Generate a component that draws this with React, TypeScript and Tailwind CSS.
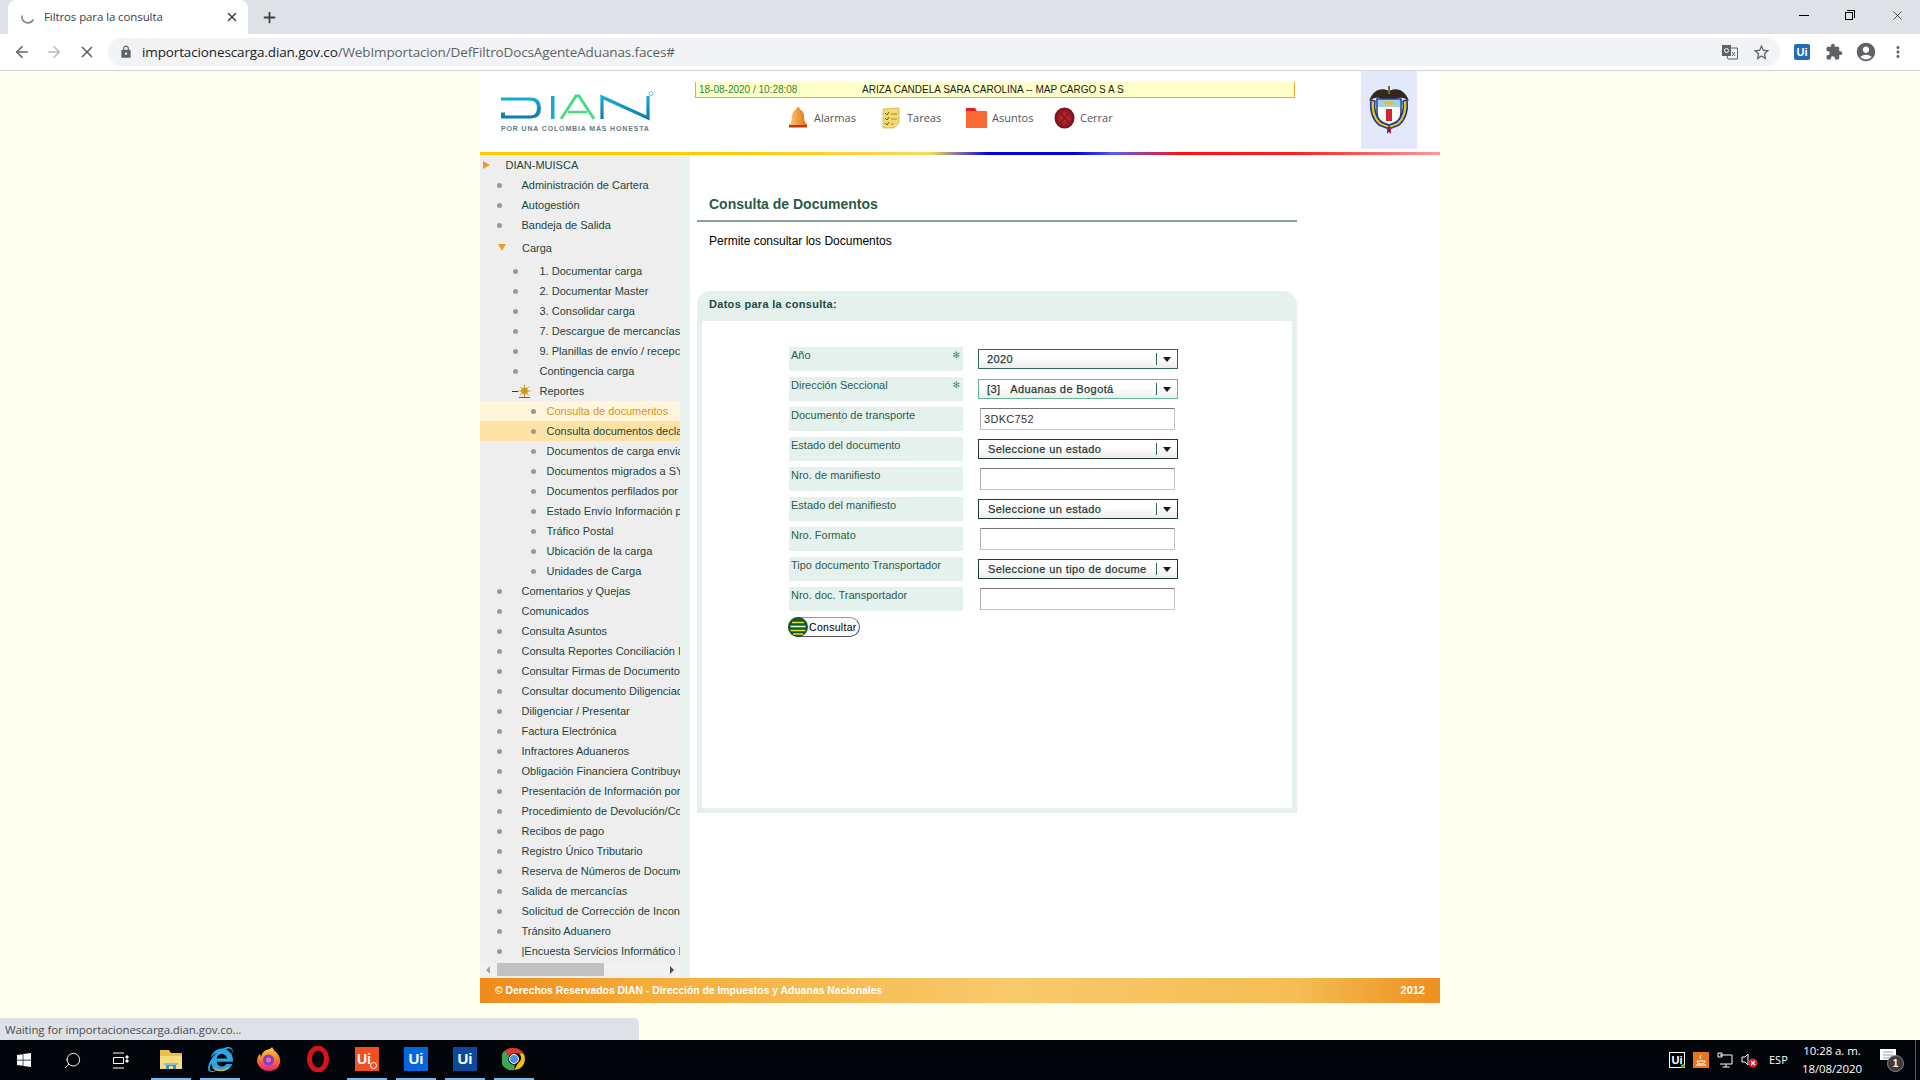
import { ArrowLeft, ArrowRight, Plus, Search, X } from "lucide-react";
import { FaInternetExplorer, FaWindows } from "react-icons/fa";
import { MdAccountCircle, MdExtension, MdLock, MdMoreVert, MdStarBorder } from "react-icons/md";

type MenuRow = { label: string; level: 1 | 2 | 3; kind?: "open" | "root" | "reports"; active?: "current" | "hover"; tall?: boolean };

const menu: MenuRow[] = [
  { label: "DIAN-MUISCA", level: 1, kind: "root" },
  { label: "Administración de Cartera", level: 1 },
  { label: "Autogestión", level: 1 },
  { label: "Bandeja de Salida", level: 1 },
  { label: "Carga", level: 1, kind: "open", tall: true },
  { label: "1. Documentar carga", level: 2 },
  { label: "2. Documentar Master", level: 2 },
  { label: "3. Consolidar carga", level: 2 },
  { label: "7. Descargue de mercancías", level: 2 },
  { label: "9. Planillas de envío / recepción", level: 2 },
  { label: "Contingencia carga", level: 2 },
  { label: "Reportes", level: 2, kind: "reports" },
  { label: "Consulta de documentos", level: 3, active: "current" },
  { label: "Consulta documentos declarados", level: 3, active: "hover" },
  { label: "Documentos de carga enviados", level: 3 },
  { label: "Documentos migrados a SYGA", level: 3 },
  { label: "Documentos perfilados por riesgo", level: 3 },
  { label: "Estado Envío Información portal", level: 3 },
  { label: "Tráfico Postal", level: 3 },
  { label: "Ubicación de la carga", level: 3 },
  { label: "Unidades de Carga", level: 3 },
  { label: "Comentarios y Quejas", level: 1 },
  { label: "Comunicados", level: 1 },
  { label: "Consulta Asuntos", level: 1 },
  { label: "Consulta Reportes Conciliación Importación", level: 1 },
  { label: "Consultar Firmas de Documentos", level: 1 },
  { label: "Consultar documento Diligenciado", level: 1 },
  { label: "Diligenciar / Presentar", level: 1 },
  { label: "Factura Electrónica", level: 1 },
  { label: "Infractores Aduaneros", level: 1 },
  { label: "Obligación Financiera Contribuyentes", level: 1 },
  { label: "Presentación de Información por envío", level: 1 },
  { label: "Procedimiento de Devolución/Compensación", level: 1 },
  { label: "Recibos de pago", level: 1 },
  { label: "Registro Único Tributario", level: 1 },
  { label: "Reserva de Números de Documentos", level: 1 },
  { label: "Salida de mercancías", level: 1 },
  { label: "Solicitud de Corrección de Inconsistencias", level: 1 },
  { label: "Tránsito Aduanero", level: 1 },
  { label: "|Encuesta Servicios Informático Electrónicos", level: 1 },
];

function Dot() {
  return <span className="block w-[5px] h-[5px] rounded-full bg-[#999999]" />;
}

function MenuItem({ row }: { row: MenuRow }) {
  const bg = row.active === "current" ? "bg-[#fff6dc]" : row.active === "hover" ? "bg-[#ffe3a6]" : "";
  const color = row.active === "current" ? "text-[#d8921c]" : "text-[#24443a]";
  return (
    <div className={`flex items-center whitespace-nowrap overflow-hidden w-[200px] ${row.tall ? "h-[26px]" : "h-[20px]"} ${bg} ${color}`}>
      {row.kind === "root" && (
        <>
          <span className="ml-[3px] w-0 h-0 border-y-[4px] border-y-transparent border-l-[7px] border-l-[#f09a28]" />
          <span className="ml-[15.5px]">{row.label}</span>
        </>
      )}
      {row.kind === "open" && (
        <>
          <span className="ml-[18px] -mt-[2px] w-0 h-0 border-x-[4px] border-x-transparent border-t-[7px] border-t-[#f09a28]" />
          <span className="ml-[16px]">{row.label}</span>
        </>
      )}
      {row.kind === "reports" && (
        <>
          <span className="ml-[32px] w-[6px] h-[1px] bg-[#333333]" />
          <svg width="13" height="13" viewBox="0 0 13 13">
            <circle cx="6.5" cy="6" r="3.4" fill="#d8a015" />
            <path d="M6.5 0v12M0.5 6h12M2.2 1.7l8.6 8.6M10.8 1.7l-8.6 8.6" stroke="#c79a1c" strokeWidth="1" />
            <path d="M1 12.5h11" stroke="#4c7a2c" strokeWidth="1" />
          </svg>
          <span className="ml-[8.5px]">{row.label}</span>
        </>
      )}
      {!row.kind && row.level === 1 && (
        <>
          <span className="ml-[17px]"><Dot /></span>
          <span className="ml-[19.5px]">{row.label}</span>
        </>
      )}
      {!row.kind && row.level === 2 && (
        <>
          <span className="ml-[33px]"><Dot /></span>
          <span className="ml-[21.5px]">{row.label}</span>
        </>
      )}
      {!row.kind && row.level === 3 && (
        <>
          <span className="ml-[51px]"><Dot /></span>
          <span className="ml-[10.5px]">{row.label}</span>
        </>
      )}
    </div>
  );
}

function SelectBox({ text, border, inset }: { text: string; border: string; inset?: boolean }) {
  return (
    <div className={`ml-[15px] flex items-center w-[200px] h-[20px] border-[1.5px] ${border} bg-[linear-gradient(#ffffff,#ffffff_40%,#ececec)] text-[11px] tracking-[0.4px] [-webkit-text-stroke:0.25px] text-[#1f3a32]`}>
      <span className={`ml-[8px] w-[160px] overflow-hidden whitespace-pre ${inset ? "pl-[1px]" : ""}`}>{text}</span>
      <span className="ml-[9px] w-[1px] h-[12px] bg-[#2e6b56]" />
      <span className="ml-[6px] w-0 h-0 border-x-[4px] border-x-transparent border-t-[5px] border-t-[#1a1a1a]" />
    </div>
  );
}

function TextBox({ value }: { value?: string }) {
  return (
    <div className="ml-[17px] flex items-center w-[195px] h-[22px] border border-[#c4c4c4] border-t-[#777777] border-l-[#b0b0b0] bg-white pl-[3px] text-[11px] tracking-[0.3px] text-[#333333]">
      {value}
    </div>
  );
}

function FormRow({ label, required, children }: { label: string; required?: boolean; children: React.ReactNode }) {
  return (
    <div className="flex items-center h-[24px]">
      <div className="relative self-stretch w-[174px] bg-[#e5f1ec] pl-[2px] pt-[1px] text-[11px] leading-[14px] text-[#2e5c4c]">
        {label}
        {required && <span className="absolute right-[3px] top-[1px] text-[9px] leading-[14px] text-[#4f8570] font-['DejaVu_Sans']">✻</span>}
      </div>
      {children}
    </div>
  );
}

function DianLogo() {
  return (
    <div className="pl-[21px] pt-[20px] w-[215px]">
      <svg width="155" height="30" viewBox="0 0 155 30" className="block">
        <defs>
          <linearGradient id="dn" x1="0" x2="0" y1="0" y2="1">
            <stop offset="0" stopColor="#16aedb" />
            <stop offset="1" stopColor="#1278a8" />
          </linearGradient>
        </defs>
        <path d="M0 6.500h30q10 0 10 10.500t-10 10.500H0v-6h4v3h25q7 0 7-7.500t-7-7.500H0z" fill="url(#dn)" fillRule="evenodd" />
        <rect x="50" y="5" width="3.500" height="23" fill="#1ba7cf" />
        <path d="M60 28 75 5h3l15 23" fill="none" stroke="#4fd986" strokeWidth="3" />
        <path d="M67 21h19" stroke="#4fd986" strokeWidth="2.500" />
        <path d="M101 28V6l46 21V5" fill="none" stroke="url(#dn)" strokeWidth="3.200" />
        <circle cx="150" cy="2.500" r="2" fill="none" stroke="#27aacc" strokeWidth="0.700" />
      </svg>
      <div className="mt-[3px] text-[7px] leading-[9px] tracking-[0.85px] font-bold text-[#667a80] whitespace-nowrap">POR UNA COLOMBIA MÁS HONESTA</div>
    </div>
  );
}

function CoatOfArms() {
  return (
    <svg width="42" height="48" viewBox="0 0 42 48">
      <path d="M21 5C13 1 5 4 1 15c5-4 9-4 13-2h14c4-2 8-2 13 2C37 4 29 1 21 5z" fill="#33281c" />
      <path d="M21 0v8" stroke="#7a6a3c" strokeWidth="2" />
      <path d="M3 14q-2 16 8 25l10 4 10-4q10-9 8-25l-4 1q2 13-6 21l-8 3-8-3q-8-8-6-21z" fill="#f2c40c" stroke="#1b3a94" strokeWidth="1.500" />
      <path d="M9 13h24v14q0 9-12 12-12-3-12-12z" fill="#ffffff" stroke="#1b3a94" strokeWidth="1.500" />
      <rect x="10" y="14" width="22" height="7" fill="#9fd0e8" />
      <path d="M18 23h6v12h-6z" fill="#d8242c" />
      <path d="M16 17h10" stroke="#e6c020" strokeWidth="3" />
      <path d="M19 41h4v7l-2-2-2 2z" fill="#c21f33" />
      <path d="M21 40v6" stroke="#1b3a94" strokeWidth="1.400" />
    </svg>
  );
}

function BellIcon() {
  return (
    <svg width="20" height="22" viewBox="0 0 20 22">
      <defs>
        <linearGradient id="bl" x1="0" x2="1" y1="0" y2="0">
          <stop offset="0" stopColor="#fbd080" />
          <stop offset="1" stopColor="#e2680e" />
        </linearGradient>
      </defs>
      <path d="M10 0q2 0 2 2.500 4 1.500 4 7 0 6 3.500 8.500H.500Q4 15.500 4 9.500q0-5.500 4-7Q8 0 10 0z" fill="url(#bl)" />
      <path d="M1 18h18v2.500H1z" fill="#b83c10" />
    </svg>
  );
}

function NoteIcon() {
  return (
    <svg width="20" height="22" viewBox="0 0 20 22">
      <path d="M2 2l16-1v15l-5 5-11 0z" fill="#f4db6c" stroke="#c7ac45" strokeWidth="0.700" />
      <path d="M4 6l2 2 2-3M4 11l2 2 2-3M4 16l2 2 2-3" fill="none" stroke="#4c4c30" strokeWidth="0.900" />
      <path d="M10 7h6M10 12h6M10 17h3" stroke="#8c8450" strokeWidth="0.900" />
    </svg>
  );
}

function FolderIcon() {
  return (
    <svg width="21" height="20" viewBox="0 0 21 20">
      <path d="M0 0h9l2 3h10v17H0z" fill="#e02020" />
      <path d="M0 3h21v17H0z" fill="#fb6a35" />
    </svg>
  );
}

function CloseBallIcon() {
  return (
    <svg width="21" height="22" viewBox="0 0 21 22">
      <defs>
        <radialGradient id="rb" cx="0.500" cy="0.500" r="0.550">
          <stop offset="0" stopColor="#d8343c" />
          <stop offset="1" stopColor="#6e0a12" />
        </radialGradient>
      </defs>
      <ellipse cx="10.500" cy="11" rx="10" ry="10.500" fill="url(#rb)" />
      <path d="M6 6l9 10M15 6L6 16" stroke="#8c1a20" strokeWidth="2" />
    </svg>
  );
}

function NavItem({ icon, label, w }: { icon: React.ReactNode; label: string; w: string }) {
  return (
    <div className={`flex items-center ${w}`}>
      <span className="w-[25px] flex -ml-[1px] mr-[1px]">{icon}</span>
      <span className="text-[11px] text-[#555555] font-['Open_Sans']">{label}</span>
    </div>
  );
}

function TranslateIcon() {
  return (
    <svg width="16" height="16" viewBox="0 0 16 16">
      <path d="M0 1h9v11H0z" fill="#5f6368" />
      <path d="M9 4h6.500v11H6l-1-3" fill="none" stroke="#5f6368" strokeWidth="1" />
      <circle cx="4.500" cy="6.500" r="2" fill="none" stroke="#fff" strokeWidth="1" />
      <path d="M10 8l3 4M13 8l-3 4" stroke="#5f6368" strokeWidth="1" />
    </svg>
  );
}

function Spinner() {
  return (
    <svg width="16" height="16" viewBox="0 0 16 16">
      <path d="M2 7a6 6 0 0 0 11 4" fill="none" stroke="#80868b" strokeWidth="1.600" strokeLinecap="round" />
    </svg>
  );
}

function UiSquare({ bg }: { bg: string }) {
  return (
    <span className={`flex items-center justify-center w-[24px] h-[24px] text-[15px] font-bold text-white ${bg} font-['Liberation_Sans']`}>Ui</span>
  );
}

function TaskSlot({ children, active }: { children: React.ReactNode; active?: boolean }) {
  return (
    <div className={`flex items-center justify-center w-[40px] h-[40px] mr-[9px] border-b-2 ${active ? "border-[#76b9ed]" : "border-transparent"}`}>
      {children}
    </div>
  );
}

export default function App() {
  return (
    <div className="flex flex-col w-[1920px] h-[1080px] overflow-hidden relative font-['Liberation_Sans',sans-serif] text-[11px]">
      {/* tabs */}
      <div className="flex h-[34px] bg-[#dee1e6] shrink-0">
        <div className="ml-[8px] flex items-center w-[240px] h-[34px] bg-white rounded-t-[8px] pl-[12px] pr-[9px]">
          <Spinner />
          <span className="ml-[8px] flex-1 text-[11.5px] text-[#3c4043] font-['Open_Sans'] tracking-[-0.1px]">Filtros para la consulta</span>
          <X size={14} strokeWidth={2.500} className="text-[#3c4043]" />
        </div>
        <Plus size={17} strokeWidth={2.500} className="ml-[13px] mt-[9px] text-[#3c4043]" />
        <div className="flex-1" />
        <div className="flex items-center h-[30px] text-black">
          <span className="w-[10px] h-[1px] bg-black mr-[36px]" />
          <span className="relative w-[10px] h-[10px] mr-[35px]">
            <span className="absolute left-0 bottom-0 w-[8px] h-[8px] border border-black bg-[#dee1e6]" />
            <span className="absolute right-0 top-0 w-[8px] h-[8px] border-t border-r border-black" />
          </span>
          <X size={15} strokeWidth={1} className="mr-[15px]" />
        </div>
      </div>
      {/* toolbar */}
      <div className="flex items-center h-[37px] bg-white border-b border-[#d2d4d6] shrink-0">
        <ArrowLeft size={18} strokeWidth={2.200} className="ml-[13px] text-[#5f6368]" />
        <ArrowRight size={18} strokeWidth={2.200} className="ml-[14px] text-[#babcbe]" />
        <X size={18} strokeWidth={2.200} className="ml-[15px] text-[#5f6368]" />
        <div className="ml-[12px] flex items-center w-[1672px] h-[28px] rounded-full bg-[#f1f3f4] pl-[11px]">
          <MdLock size={14} className="text-[#5f6368]" />
          <span className="ml-[9px] text-[13.5px] font-['Open_Sans'] tracking-[-0.13px] text-[#5f6368]">
            <span className="text-[#202124]">importacionescarga.dian.gov.co</span>/WebImportacion/DefFiltroDocsAgenteAduanas.faces#
          </span>
          <span className="flex-1" />
          <TranslateIcon />
          <MdStarBorder size={19} className="ml-[14px] mr-[9px] text-[#5f6368]" />
        </div>
        <span className="ml-[14px] flex items-center justify-center w-[16px] h-[16px] rounded-[2px] bg-[#1f6fb8] text-[11px] font-bold text-white">Ui</span>
        <MdExtension size={18} className="ml-[15px] text-[#5f6368]" />
        <MdAccountCircle size={22} className="ml-[12px] text-[#5f6368]" />
        <MdMoreVert size={18} className="ml-[12px] text-[#5f6368]" />
      </div>

      {/* page */}
      <div className="flex-1 flex justify-center bg-[#ffffef]">
        <div className="w-[960px]">
          <div className="flex h-[81px] bg-white">
            <DianLogo />
            <div className="w-[600px] pt-[11px]">
              <div className="flex items-center h-[16px] border border-t-0 border-[#f0a830] bg-[#ffffc8] text-[10px] leading-[14px]">
                <span className="pl-[3px] w-[166px] text-[#1f8a3a]">18-08-2020 / 10:28:08</span>
                <span className="text-[#1a1a1a]">ARIZA CANDELA SARA CAROLINA -- MAP CARGO S A S</span>
              </div>
              <div className="flex items-center pl-[94px] mt-[9px]">
                <NavItem icon={<BellIcon />} label="Alarmas" w="w-[93px]" />
                <NavItem icon={<NoteIcon />} label="Tareas" w="w-[85px]" />
                <NavItem icon={<FolderIcon />} label="Asuntos" w="w-[88px]" />
                <NavItem icon={<CloseBallIcon />} label="Cerrar" w="w-[80px]" />
              </div>
            </div>
            <div className="ml-[66px] flex items-center justify-center w-[56px] h-[78px] bg-[#e3e9fa]">
              <CoatOfArms />
            </div>
          </div>
          <div className="h-[3px] bg-[linear-gradient(90deg,#ffcc00_0%,#ffcc00_25%,#fad85a_47%,#0000e0_53%,#0000e0_62%,#5a5af0_66%,#ff1010_73%,#ff2020_85%,#ff9a9a_100%)]" />
          <div className="flex h-[823px] bg-white">
            <div className="flex flex-col w-[200px] bg-[#eeeeee]">
              <div className="flex-1">
                {menu.map((row) => (
                  <MenuItem key={row.label} row={row} />
                ))}
              </div>
              <div className="flex items-center h-[13px] mb-[2px] bg-[#f1f1f1]">
                <span className="ml-[6px] w-0 h-0 border-y-[4px] border-y-transparent border-r-[4px] border-r-[#a3a3a3]" />
                <span className="ml-[7px] w-[107px] h-[13px] bg-[#c1c1c1]" />
                <span className="ml-[66px] w-0 h-0 border-y-[4px] border-y-transparent border-l-[4px] border-l-[#505050]" />
              </div>
            </div>
            <div className="w-[10px] bg-[#e8f2ee]" />
            <div className="pl-[7px] pt-[41px]">
              <div className="w-[600px] border-b-2 border-[#8aa398] pl-[12px] pb-[8px] text-[14px] leading-[16px] font-bold text-[#2c5a46]">Consulta de Documentos</div>
              <div className="mt-[12px] pl-[12px] text-[12px] leading-[14px] text-black">Permite consultar los Documentos</div>
              <div className="mt-[43px] w-[600px] rounded-t-[14px] bg-[#e5f1ec] px-[5px] pb-[5px]">
                <div className="h-[30px] pl-[7px] pt-[5.5px] text-[11px] leading-[14px] font-bold tracking-[0.3px] text-[#1f4a40]">Datos para la consulta:</div>
                <div className="flex flex-col gap-[6px] h-[487px] bg-white pl-[87px] pt-[26px]">
                  <FormRow label="Año" required><SelectBox text="2020" border="border-[#2e6b56]" /></FormRow>
                  <FormRow label="Dirección Seccional" required><SelectBox text="[3]   Aduanas de Bogotá" border="border-[#63b896]" /></FormRow>
                  <FormRow label="Documento de transporte"><TextBox value="3DKC752" /></FormRow>
                  <FormRow label="Estado del documento"><SelectBox text="Seleccione un estado" border="border-[#1c3a30]" inset /></FormRow>
                  <FormRow label="Nro. de manifiesto"><TextBox /></FormRow>
                  <FormRow label="Estado del manifiesto"><SelectBox text="Seleccione un estado" border="border-[#1c3a30]" inset /></FormRow>
                  <FormRow label="Nro. Formato"><TextBox /></FormRow>
                  <FormRow label="Tipo documento Transportador"><SelectBox text="Seleccione un tipo de documento" border="border-[#1c3a30]" inset /></FormRow>
                  <FormRow label="Nro. doc. Transportador"><TextBox /></FormRow>
                  <div className="flex items-center w-[72px] h-[20px] -ml-[1px] rounded-full border border-[#9a9a9a] border-r-[#555555] border-b-[#555555] bg-[#fafafa]">
                    <svg width="20" height="20" viewBox="0 0 20 20" className="shrink-0 -ml-[1px]">
                      <circle cx="10" cy="10" r="10" fill="#0a5a2a" />
                      <path d="M4 5.500h12M2.500 13.500h15M5 17h10" stroke="#f0dc30" strokeWidth="1.600" />
                      <path d="M2.500 9.500h15" stroke="#e8f4e0" strokeWidth="1.600" />
                    </svg>
                    <span className="ml-[1px] pt-[1px] text-[10.5px] tracking-[0.3px] text-black">Consultar</span>
                  </div>
                </div>
              </div>
            </div>
          </div>
          <div className="flex items-center justify-between h-[25px] pl-[15px] pr-[15px] bg-[linear-gradient(90deg,#ee8a1a_0%,#f5ae3c_18%,#f7ca6b_55%,#f5bd55_85%,#ee8f1e_100%)] font-bold text-white">
            <span className="text-[10.4px]">© Derechos Reservados DIAN - Dirección de Impuestos y Aduanas Nacionales</span>
            <span className="text-[11px]">2012</span>
          </div>
        </div>
      </div>

      {/* status bubble */}
      <div className="absolute left-0 top-[1018px] w-[639px] h-[22px] rounded-tr-[5px] bg-[#dee1e6] pl-[5px] text-[11.5px] leading-[23px] font-['Open_Sans'] tracking-[-0.1px] text-[#4a4d50]">
        Waiting for importacionescarga.dian.gov.co...
      </div>

      {/* taskbar */}
      <div className="flex items-center h-[40px] bg-[#02050a] shrink-0 text-white">
        <div className="flex items-center justify-center w-[48px]"><FaWindows size={16} /></div>
        <div className="flex items-center justify-center w-[48px]"><Search size={19} strokeWidth={1.200} className="-scale-x-100" /></div>
        <div className="flex items-center justify-center w-[48px] mr-[7px]">
          <svg width="17" height="17" viewBox="0 0 17 17" fill="none" stroke="#fff" strokeWidth="1">
            <path d="M1 1h11M1 16h11M1.500 5.500h10v6h-10z" />
            <path d="M14 4h2v2h-2zM14 8h2v2h-2z" fill="#fff" />
          </svg>
        </div>
        <TaskSlot active>
          <svg width="24" height="24" viewBox="0 0 24 24">
            <path d="M1 3h9l2 3h11v16H1z" fill="#e8c04c" />
            <path d="M1 9h22v13H1z" fill="#f8dc7c" />
            <path d="M7 22v-6h10v6h-3v-3h-4v3z" fill="#3d8fd0" />
            <path d="M5 16h14v2H5z" fill="#7cc4ec" />
          </svg>
        </TaskSlot>
        <TaskSlot active>
          <span className="relative flex">
            <FaInternetExplorer size={25} className="text-[#2aa6e6]" />
            <span className="absolute left-[1px] top-[1px] w-[23px] h-[23px] rounded-full border border-transparent border-b-[#e8b820]" />
          </span>
        </TaskSlot>
        <TaskSlot>
          <svg width="24" height="26" viewBox="0 0 24 26">
            <defs>
              <linearGradient id="ff" x1="0.500" x2="0.500" y1="0" y2="1">
                <stop offset="0" stopColor="#ffd43a" />
                <stop offset="0.500" stopColor="#ff7a2a" />
                <stop offset="1" stopColor="#e8207a" />
              </linearGradient>
            </defs>
            <path d="M15 1q2 4 5 6 4 5 3 10-2 8-11 8T0 16q0-6 3-8l1 3q1-5 5-7 5-1 6-3z" fill="url(#ff)" />
            <circle cx="11.500" cy="14" r="5.500" fill="#7c3fd0" />
            <circle cx="11.500" cy="14" r="2.500" fill="#f06aa8" />
          </svg>
        </TaskSlot>
        <TaskSlot>
          <svg width="24" height="26" viewBox="0 0 24 26">
            <ellipse cx="12" cy="13" rx="8.500" ry="11" fill="none" stroke="#d2141e" strokeWidth="5" />
          </svg>
        </TaskSlot>
        <TaskSlot active>
          <span className="relative flex items-center w-[24px] h-[24px] pl-[2px] bg-[#f04e23] text-[14px] font-bold text-white">
            Ui
            <span className="absolute right-[2px] bottom-[2px] w-[7px] h-[7px] rounded-full border border-white" />
          </span>
        </TaskSlot>
        <TaskSlot active><UiSquare bg="bg-[#0067df]" /></TaskSlot>
        <TaskSlot active><UiSquare bg="bg-[#0a4a9c]" /></TaskSlot>
        <TaskSlot active>
          <svg width="24" height="24" viewBox="0 0 24 24">
            <path d="M12 1a11 11 0 0 1 9.500 5.500H12a5.500 5.500 0 0 0-5 3L3 3.500A11 11 0 0 1 12 1z" fill="#d93a2f" />
            <path d="M21.500 6.500A11 11 0 0 1 12 23l4.500-7.500a5.500 5.500 0 0 0 .5-9z" fill="#f4c20d" />
            <path d="M3 3.500l4 6a5.500 5.500 0 0 0 6 8L12 23A11 11 0 0 1 3 3.500z" fill="#3aa757" />
            <circle cx="12" cy="12" r="4.500" fill="#4f8cf0" stroke="#fff" strokeWidth="1" />
          </svg>
        </TaskSlot>
        <span className="flex-1" />
        <span className="relative flex items-center justify-center w-[16px] h-[16px] border border-white text-[11px] font-bold">
          Ui
          <span className="absolute -right-[1px] -bottom-[1px] w-[4px] h-[4px] rounded-full bg-[#3ab54a]" />
        </span>
        <span className="ml-[8px] flex items-center justify-center w-[16px] h-[16px] bg-[#e8741c]">
          <svg width="12" height="12" viewBox="0 0 12 12" fill="none" stroke="#fff" strokeWidth="1">
            <path d="M2 7h8q0 3-4 3T2 7zM1 11h10M6 1q-2 2 0 4" />
          </svg>
        </span>
        <svg width="16" height="16" viewBox="0 0 16 16" fill="none" stroke="#fff" strokeWidth="1" className="ml-[8px]">
          <path d="M3 3h12v9H3M1 1h4v4H1zM9 12v3M5.500 15h7" />
        </svg>
        <svg width="18" height="16" viewBox="0 0 18 16" className="ml-[8px]">
          <path d="M1 5h3l3-3v11l-3-3H1z" fill="none" stroke="#fff" strokeWidth="1" />
          <circle cx="12" cy="11" r="4.500" fill="#e81b30" />
          <path d="M10 9l4 4M14 9l-4 4" stroke="#fff" strokeWidth="1.200" />
        </svg>
        <span className="ml-[10px] w-[20px] text-[11px] font-['Open_Sans']">ESP</span>
        <div className="ml-[7px] w-[72px] text-center text-[11.5px] leading-[18px] font-['Open_Sans'] tracking-[-0.1px]">
          <div>10:28 a. m.</div>
          <div>18/08/2020</div>
        </div>
        <span className="relative ml-[12px] w-[24px] h-[24px]">
          <svg width="16" height="16" viewBox="0 0 16 16" className="absolute left-0 top-[1px]">
            <path d="M0 0h16v11h-4l-3 4v-4H0z" fill="#fff" />
            <path d="M3 3h10M3 6h10M3 9h6" stroke="#999" strokeWidth="1" />
          </svg>
          <span className="absolute left-[7px] top-[7px] flex items-center justify-center w-[17px] h-[17px] rounded-full bg-[#3c3c3c] border border-[#888] text-[10px] font-bold">1</span>
        </span>
        <span className="ml-[11px] mr-[4px] w-[1px] h-[40px] bg-[#555555]" />
      </div>
    </div>
  );
}
